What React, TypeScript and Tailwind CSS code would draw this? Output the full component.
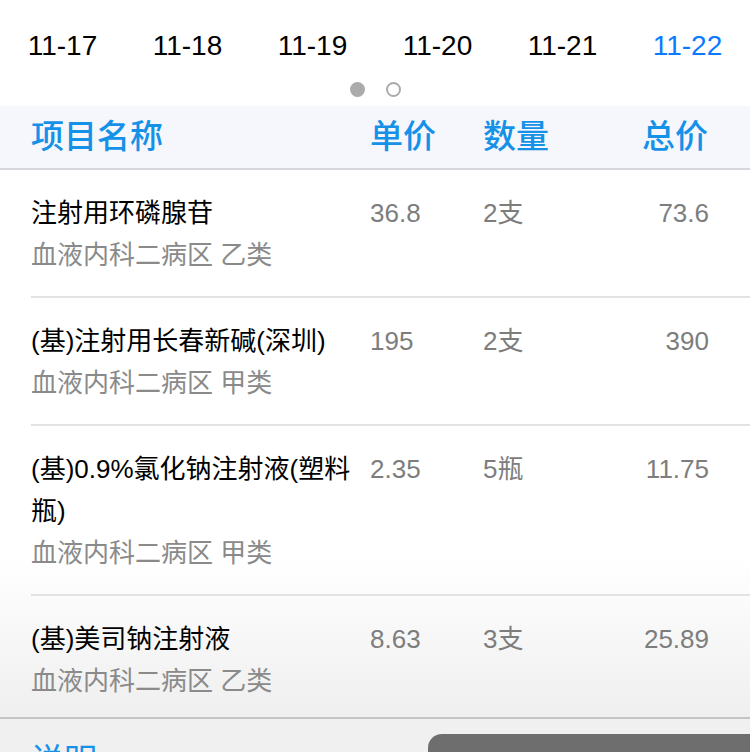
import React from 'react'

const font = { fontFamily: '"Liberation Sans", "Noto Sans CJK SC", sans-serif' }

const dates = ['11-17', '11-18', '11-19', '11-20', '11-21', '11-22']

interface Item {
  name: string
  dept: string
  price: string
  qty: string
  total: string
}

const items: Item[] = [
  { name: '注射用环磷腺苷', dept: '血液内科二病区 乙类', price: '36.8', qty: '2支', total: '73.6' },
  { name: '(基)注射用长春新碱(深圳)', dept: '血液内科二病区 甲类', price: '195', qty: '2支', total: '390' },
  { name: '(基)0.9%氯化钠注射液(塑料瓶)', dept: '血液内科二病区 甲类', price: '2.35', qty: '5瓶', total: '11.75' },
  { name: '(基)美司钠注射液', dept: '血液内科二病区 乙类', price: '8.63', qty: '3支', total: '25.89' }
]

function DateBar() {
  return (
    <div className="pt-[26px] bg-white">
      <div className="flex">
        {dates.map((d, i) => (
          <div
            key={d}
            className={`w-[125px] text-center text-[28px] leading-[40px] ${
              i === dates.length - 1 ? 'text-[#0a7aff]' : 'text-black'
            }`}
          >
            {d}
          </div>
        ))}
      </div>
      {/* Page dots */}
      <div className="flex justify-center items-start gap-[21px] h-[40px] pt-[16px]">
        <span className="w-[15px] h-[15px] rounded-full bg-[#ababab]" />
        <span className="w-[15px] h-[15px] rounded-full bg-white border-2 border-[#ababab]" />
      </div>
    </div>
  )
}

function TableHeader() {
  return (
    <div className="flex items-center h-[64px] bg-[#f6f7fc] border-b-2 border-[#d6d6dc] text-[#1591e8] text-[33px] font-medium pl-[31px]">
      <div className="w-[339px]">项目名称</div>
      <div className="w-[113px]">单价</div>
      <div className="w-[97px]">数量</div>
      <div className="w-[128px] text-right">总价</div>
    </div>
  )
}

function Row({ item, last }: { item: Item; last: boolean }) {
  return (
    <div
      className={`flex pt-[22px] text-[26px] leading-[42px] ${
        last ? 'pb-[15px]' : 'pb-[20px] border-b-2 border-[#e3e3e3]'
      }`}
    >
      <div className="w-[339px] pr-[14px]">
        <div className="text-black">{item.name}</div>
        <div className="text-[#8a8a8a]">{item.dept}</div>
      </div>
      <div className="w-[113px] text-[#7d7d7d]">{item.price}</div>
      <div className="w-[97px] text-[#7d7d7d]">{item.qty}</div>
      <div className="w-[129px] text-right text-[#7d7d7d]">{item.total}</div>
    </div>
  )
}

export default function App() {
  return (
    <div className="w-[750px] h-[752px] overflow-hidden bg-white" style={font}>
      <DateBar />
      <TableHeader />
      <div className="pl-[31px] bg-[linear-gradient(to_bottom,#ffffff_0%,#ffffff_71%,#efefef_100%)]">
        {items.map((it, i) => (
          <Row key={i} item={it} last={i === items.length - 1} />
        ))}
      </div>
      {/* Bottom bar */}
      <div className="flex items-start justify-between h-[120px] bg-[#f0f0f0] border-t-2 border-[#c4c4c4]">
        <div className="pl-[31px] pt-[20px] text-[33px] leading-[44px] text-[#1591e8]">说明</div>
        <div className="mt-[15px] w-[322px] h-[80px] rounded-tl-[14px] bg-[#6e6e6e]" />
      </div>
    </div>
  )
}
